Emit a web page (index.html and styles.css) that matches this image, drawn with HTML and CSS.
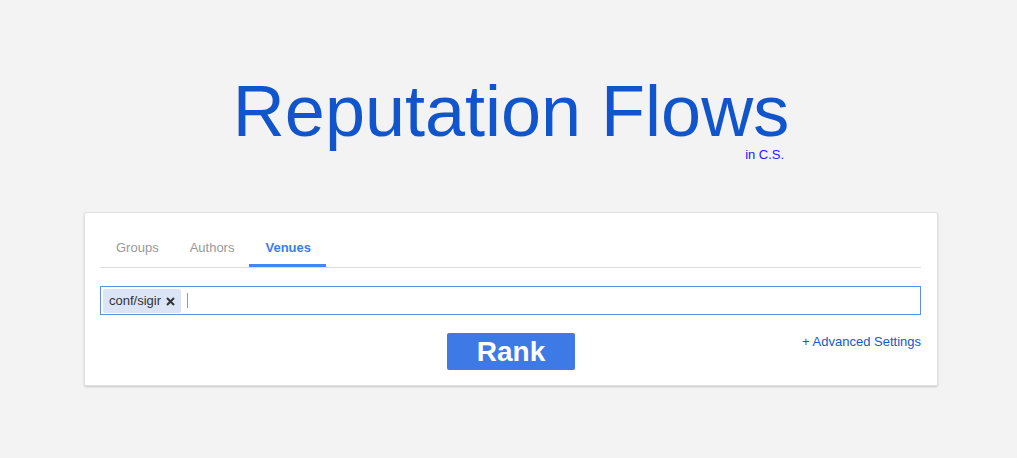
FILE: index.html
```html
<!DOCTYPE html>
<html>
<head>
<meta charset="utf-8">
<link rel="stylesheet" href="styles.css">
</head>
<body>
<header class="brand">
  <div class="brand-inner">
    <h1 class="title">Reputation Flows</h1>
    <div class="subtitle">in C.S.</div>
  </div>
</header>
<main class="card">
  <nav class="tabs">
    <span class="tab">Groups</span>
    <span class="tab">Authors</span>
    <span class="tab active">Venues</span>
  </nav>
  <div class="tag-input">
    <span class="chip">conf/sigir<svg class="chip-x" width="9" height="9" viewBox="0 0 9 9"><path d="M1 1L8 8M8 1L1 8" stroke="#333" stroke-width="2" stroke-linecap="butt"/></svg></span>
    <span class="caret"></span>
  </div>
  <div class="actions">
    <button class="rank">Rank</button>
    <a class="advanced">+ Advanced Settings</a>
  </div>
</main>
</body>
</html>
```
FILE: styles.css
```css
html, body {
  margin: 0;
  padding: 0;
}
body {
  background: #f3f3f3;
  font-family: "Liberation Sans", Arial, sans-serif;
  width: 1017px;
  height: 458px;
  overflow: hidden;
}
.brand {
  text-align: center;
  padding-top: 76px;
  padding-left: 5px;
  height: 136px;
}
.brand-inner {
  display: inline-block;
  text-align: right;
}
.title {
  margin: 0;
  font-size: 72px;
  line-height: 70px;
  font-weight: normal;
  color: #1155cc;
}
.subtitle {
  font-size: 13px;
  line-height: 15px;
  margin-top: 1px;
  padding-right: 5px;
  color: #1a1aff;
}
.card {
  box-sizing: border-box;
  margin: 0 0 0 84px;
  width: 854px;
  height: 174px;
  background: #fff;
  border: 1px solid #e2e2e2;
  border-radius: 2px;
  box-shadow: 0 1px 2px rgba(0, 0, 0, 0.18);
  padding: 16px 16px 15px 15px;
}
.tabs {
  display: flex;
  border-bottom: 1px solid #dcdcdc;
}
.tab {
  font-size: 13px;
  line-height: 15px;
  padding: 11px 15px 9px 16px;
  border-bottom: 3px solid transparent;
  color: #999;
}
.tab.active {
  color: #3b7de8;
  font-weight: bold;
  border-bottom-color: #4285f4;
}
.tag-input {
  margin-top: 18px;
  height: 29px;
  box-sizing: border-box;
  border: 1px solid #5b8fe6;
  display: flex;
  align-items: center;
  padding: 1px 2px;
}
.chip {
  display: flex;
  align-items: center;
  background: #dce5f6;
  color: #333;
  font-size: 13px;
  line-height: 24px;
  height: 24px;
  padding: 0 6px;
  border-radius: 2px;
}
.chip-x {
  margin-left: 5px;
  margin-top: 1px;
}
.caret {
  width: 0;
  height: 15px;
  border-left: 1px solid #999;
  margin-left: 6px;
}
.actions {
  margin-top: 18px;
  display: flex;
  justify-content: center;
  position: relative;
}
.rank {
  width: 128px;
  height: 37px;
  background: #3d7ae6;
  border: none;
  border-radius: 2px;
  color: #fff;
  font-family: "Liberation Sans", Arial, sans-serif;
  font-size: 28px;
  font-weight: bold;
  padding: 0;
  line-height: 37px;
  margin-left: 1px;
}
.advanced {
  position: absolute;
  right: 0;
  top: 1px;
  font-size: 13px;
  line-height: 15px;
  color: #1a55d0;
}
```
